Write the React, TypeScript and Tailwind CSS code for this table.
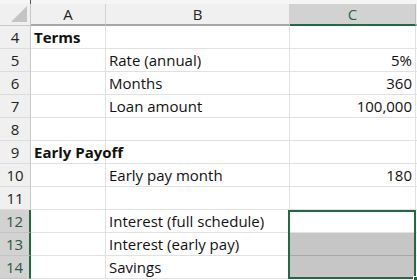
import React from 'react'

type Row = { n: number; a?: string; b?: string; c?: string; sel?: boolean; fill?: boolean }

const rows: Row[] = [
  { n: 4, a: 'Terms' },
  { n: 5, b: 'Rate (annual)', c: '5%' },
  { n: 6, b: 'Months', c: '360' },
  { n: 7, b: 'Loan amount', c: '100,000' },
  { n: 8 },
  { n: 9, a: 'Early Payoff' },
  { n: 10, b: 'Early pay month', c: '180' },
  { n: 11 },
  { n: 12, b: 'Interest (full schedule)', sel: true },
  { n: 13, b: 'Interest (early pay)', sel: true, fill: true },
  { n: 14, b: 'Savings', sel: true, fill: true },
]

export default function App() {
  return (
    <div
      className="relative w-[417px] h-[280px] overflow-hidden bg-white text-[15px] text-[#111]"
      style={{ fontFamily: "'Open Sans', 'Noto Sans', sans-serif" }}
    >
      {/* top strip */}
      <div className="flex h-[4px] bg-[#f5f5f5]">
        <div className="w-[31px] border-r border-[#555]" />
      </div>

      {/* column headers */}
      <div className="flex h-[22px] bg-[#f0f0f0] text-[#222]">
        <div className="relative w-[31px] border-r border-b border-[#c8c8c8]">
          <div className="absolute right-[3px] bottom-[3px] w-0 h-0 border-l-[16px] border-l-transparent border-b-[16px] border-b-[#c4c4c4]" />
        </div>
        <div className="w-[75px] border-r border-b-2 border-[#d2d2d2] border-b-[#a6a6a6] flex items-center justify-center">A</div>
        <div className="w-[184px] border-r border-b-2 border-[#d2d2d2] border-b-[#a6a6a6] flex items-center justify-center">B</div>
        <div className="w-[126px] bg-[#d2d2d2] border-r border-[#bdbdbd] border-b-2 border-b-[#1e6b41] flex items-center justify-center text-[#1e6b41]">C</div>
        <div className="flex-1 border-b-2 border-b-[#a6a6a6]" />
      </div>

      {rows.map((r) => (
        <div key={r.n} className="flex h-[23px]">
          <div
            className={
              r.sel
                ? 'w-[31px] bg-[#d2d2d2] border-b border-[#c4c4c4] border-r-2 border-r-[#1e6b41] flex items-center justify-center text-[#2a5a3c]'
                : 'w-[31px] bg-[#f0f0f0] border-b border-[#dcdcdc] border-r border-r-[#c8c8c8] flex items-center justify-center text-[#222]'
            }
          >
            {r.n}
          </div>
          <div className="w-[75px] border-r border-b border-[#e1e1e1] flex items-center pl-[3px] font-bold whitespace-nowrap">
            {r.a}
          </div>
          <div className="w-[184px] border-r border-b border-[#e1e1e1] flex items-center pl-[3px] whitespace-nowrap">
            {r.b}
          </div>
          <div
            className={
              r.fill
                ? 'w-[126px] bg-[#c6c6c6] border-b border-[#a8a8a8] flex items-center justify-end pr-[3px]'
                : 'w-[126px] border-r border-b border-[#e1e1e1] flex items-center justify-end pr-[3px]'
            }
          >
            {r.c}
          </div>
          <div className="flex-1 border-b border-[#e1e1e1]" />
        </div>
      ))}

      {/* selection outline */}
      <div className="absolute left-[288px] top-[210px] w-[128px] h-[69px] border-2 border-[#1e6b41]" />
      <div className="absolute left-[413px] top-[276px] w-[5px] h-[5px] bg-[#1e6b41] border border-white" />
    </div>
  )
}
